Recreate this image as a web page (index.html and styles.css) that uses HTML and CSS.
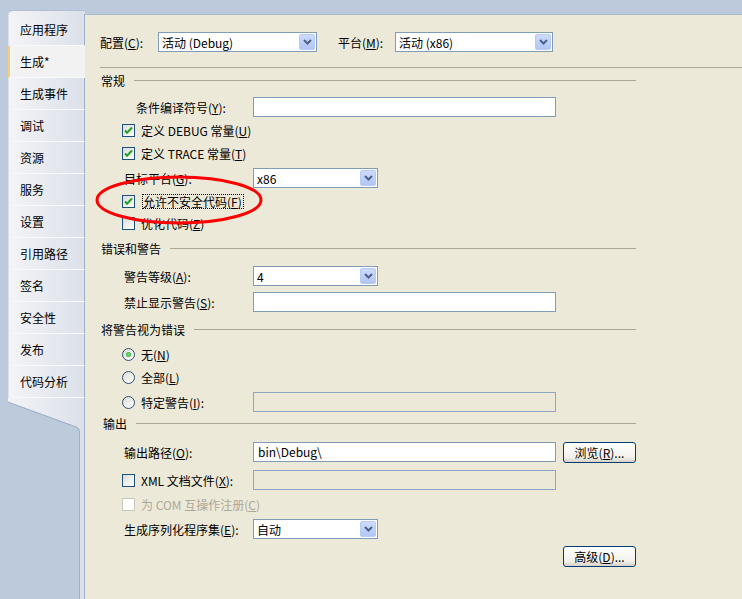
FILE: index.html
```html
<!DOCTYPE html>
<html lang="zh-CN">
<head>
  <meta charset="UTF-8" />
  <title>生成</title>
  <link rel="stylesheet" href="styles.css">
</head>
<body>
  <div class="frame">
    <div class="tabs">
      <ul class="tab-list">
        <li class="tab">应用程序</li>
        <li class="tab active">生成*</li>
        <li class="tab">生成事件</li>
        <li class="tab">调试</li>
        <li class="tab">资源</li>
        <li class="tab">服务</li>
        <li class="tab">设置</li>
        <li class="tab">引用路径</li>
        <li class="tab">签名</li>
        <li class="tab">安全性</li>
        <li class="tab">发布</li>
        <li class="tab">代码分析</li>
      </ul>
      <div class="tab-tail">
        <svg width="77" height="201" viewBox="0 0 77 201">
          <defs>
            <linearGradient id="tailFill" x1="0" y1="0" x2="1" y2="0">
              <stop offset="0" stop-color="#F3F4F7" />
              <stop offset="1" stop-color="#DBE0E9" />
            </linearGradient>
          </defs>
          <path d="M0 0H76V201H72V34Q72 30 68 28.5L1 4L0 3Z" fill="url(#tailFill)" />
          <path d="M0 3.5L1 4.5L68 29Q71.5 30.5 71.5 34V201" fill="none" stroke="#9FAEC4" />
          <path d="M76.5 0V201" stroke="#9DB1CE" />
        </svg>
      </div>
    </div>

    <div class="panel">
      <div class="toolbar">
        <span class="tb-label cfg">配置(<u>C</u>):</span>
        <div class="combo combo-cfg">
          <span>活动 (Debug)</span>
          <span class="combo-btn"><svg width="9" height="6" viewBox="0 0 9 6"><path d="M1 1l3.5 3.5L8 1" fill="none" stroke="#4D6185" stroke-width="2" /></svg></span>
        </div>
        <span class="tb-label plat">平台(<u>M</u>):</span>
        <div class="combo combo-plat">
          <span>活动 (x86)</span>
          <span class="combo-btn"><svg width="9" height="6" viewBox="0 0 9 6"><path d="M1 1l3.5 3.5L8 1" fill="none" stroke="#4D6185" stroke-width="2" /></svg></span>
        </div>
      </div>
      <div class="rule"></div>

      <div class="group mt2">常规</div>
      <div class="row field deep mt7">
        <span class="label">条件编译符号(<u>Y</u>):</span>
        <div class="text"></div>
      </div>
      <div class="row opt mt3">
        <span class="check on"><svg width="11" height="11" viewBox="0 0 11 11"><path d="M2 5.5l2 2.2L9 2.5" fill="none" stroke="#21A121" stroke-width="2" /></svg></span>
        <span>定义 DEBUG 常量(<u>U</u>)</span>
      </div>
      <div class="row opt mt3">
        <span class="check on"><svg width="11" height="11" viewBox="0 0 11 11"><path d="M2 5.5l2 2.2L9 2.5" fill="none" stroke="#21A121" stroke-width="2" /></svg></span>
        <span>定义 TRACE 常量(<u>T</u>)</span>
      </div>
      <div class="row field mt5">
        <span class="label">目标平台(<u>G</u>):</span>
        <div class="combo">
          <span>x86</span>
          <span class="combo-btn"><svg width="9" height="6" viewBox="0 0 9 6"><path d="M1 1l3.5 3.5L8 1" fill="none" stroke="#4D6185" stroke-width="2" /></svg></span>
        </div>
      </div>
      <div class="row opt mt3">
        <span class="check on"><svg width="11" height="11" viewBox="0 0 11 11"><path d="M2 5.5l2 2.2L9 2.5" fill="none" stroke="#21A121" stroke-width="2" /></svg></span>
        <span class="focus">允许不安全代码(<u>F</u>)</span>
      </div>
      <div class="row opt mt2">
        <span class="check"></span>
        <span>优化代码(<u>Z</u>)</span>
      </div>

      <div class="group mt5">错误和警告</div>
      <div class="row field mt8">
        <span class="label">警告等级(<u>A</u>):</span>
        <div class="combo">
          <span>4</span>
          <span class="combo-btn"><svg width="9" height="6" viewBox="0 0 9 6"><path d="M1 1l3.5 3.5L8 1" fill="none" stroke="#4D6185" stroke-width="2" /></svg></span>
        </div>
      </div>
      <div class="row field mt6">
        <span class="label">禁止显示警告(<u>S</u>):</span>
        <div class="text"></div>
      </div>

      <div class="group mt7">将警告视为错误</div>
      <div class="row opt mt5">
        <span class="radio on"></span>
        <span>无(<u>N</u>)</span>
      </div>
      <div class="row opt mt3">
        <span class="radio"></span>
        <span>全部(<u>L</u>)</span>
      </div>
      <div class="row opt mt5">
        <span class="opt-label"><span class="radio"></span><span>特定警告(<u>I</u>):</span></span>
        <div class="text disabled"></div>
      </div>

      <div class="group out mt1">输出</div>
      <div class="row field mt9">
        <span class="label">输出路径(<u>O</u>):</span>
        <div class="text">bin\Debug\</div>
        <button class="btn browse" type="button">浏览(<u>R</u>)...</button>
      </div>
      <div class="row opt mt8">
        <span class="opt-label"><span class="check"></span><span>XML 文档文件(<u>X</u>):</span></span>
        <div class="text disabled"></div>
      </div>
      <div class="row opt off mt4">
        <span class="check off"></span>
        <span>为 COM 互操作注册(<u>C</u>)</span>
      </div>
      <div class="row field mt5">
        <span class="label">生成序列化程序集(<u>E</u>):</span>
        <div class="combo">
          <span>自动</span>
          <span class="combo-btn"><svg width="9" height="6" viewBox="0 0 9 6"><path d="M1 1l3.5 3.5L8 1" fill="none" stroke="#4D6185" stroke-width="2" /></svg></span>
        </div>
      </div>
      <div class="row end mt7">
        <button class="btn" type="button">高级(<u>D</u>)...</button>
      </div>

      <svg class="callout" width="170" height="52" viewBox="0 0 170 52">
        <ellipse cx="85" cy="25" rx="82" ry="23" fill="none" stroke="#FF0000" stroke-width="3" />
      </svg>
    </div>
  </div>
</body>
</html>
```

FILE: styles.css
```css
* { box-sizing: border-box; }
body {
  margin: 0; overflow: hidden;
  background: #BDCADB; color: #000;
  font: 12px "Noto Sans CJK SC", "Noto Sans", sans-serif;
}
u { text-decoration: underline; }

.frame { display: flex; height: 599px; padding: 10px 0 0 8px; }

/* left tab strip */
.tabs { width: 77px; flex-shrink: 0; display: flex; flex-direction: column; }
.tab-list {
  list-style: none; margin: 0; padding: 3px 0 0;
  background: linear-gradient(to right, #F3F4F7, #DBE0E9);
  border-top: 1px solid #AFC0D6; border-left: 1px solid #D9E0EA;
  border-top-left-radius: 5px;
}
.tab {
  height: 32px; line-height: 31px;
  margin-left: 4px; padding-left: 7px;
  border-bottom: 1px solid #F9FAFB; border-right: 1px solid #9DB1CE;
}
.tab.active {
  margin-left: -1px; padding-left: 10px;
  background: #F2F2F2;
  border-left: 2px solid #F3CF7A; border-right-color: #F2F2F2;
}
.tab-tail { flex: 1; }
.tab-tail svg { display: block; }

/* property page */
.panel {
  flex: 1; position: relative;
  margin-top: 4px; padding: 17px 0 0 15px;
  background: #ECE9D8; border-top: 1px solid #A9BAD3;
}
.toolbar { display: flex; align-items: center; height: 20px; }
.tb-label.cfg { width: 58px; }
.tb-label.plat { width: 57px; margin-left: 21px; }
.rule { margin-top: 15px; border-top: 1px solid #ACA899; }

.group {
  display: flex; align-items: center; gap: 9px;
  width: 536px; height: 20px; padding-left: 1px;
}
.group::after { content: ""; flex: 1; height: 1px; background: #ACA899; }
.group.out { padding-left: 3px; }

.row { display: flex; align-items: center; height: 20px; width: 536px; }
.field { padding-left: 24px; }
.field .label { width: 129px; }
.field.deep { padding-left: 36px; }
.field.deep .label { width: 117px; }
.opt { padding-left: 22px; gap: 6px; }
.opt-label { display: flex; align-items: center; gap: 6px; width: 125px; }
.off { color: #ACA899; }
.end { justify-content: flex-end; }

.text {
  width: 303px; height: 20px; padding: 0 4px;
  line-height: 18px; white-space: pre;
  background: #fff; border: 1px solid #7F9DB9;
}
.text.disabled { background: #ECE9D8; border-color: #8EA7C4; }

.combo {
  display: flex; align-items: center;
  width: 125px; height: 20px; padding: 0 1px 0 3px;
  white-space: pre;
  background: #fff; border: 1px solid #7F9DB9;
}
.combo-cfg { width: 159px; }
.combo-plat { width: 158px; }
.combo-btn {
  display: flex; align-items: center; justify-content: center;
  width: 16px; height: 16px; margin-left: auto;
  background: linear-gradient(#CCDBFD, #B1C6F5);
  border: 1px solid #B7CAF5; border-radius: 2px;
}

.check {
  display: inline-flex; align-items: center; justify-content: center;
  width: 13px; height: 13px; flex-shrink: 0;
  border: 1px solid #1C5180;
  background: linear-gradient(135deg, #DCDCD5, #FFFFFF);
}
.check.off { border-color: #CAC8BB; background: #fff; }
.focus { margin-left: 1px; padding-right: 1px; border: 1px dotted #000; line-height: 13px; }

.radio {
  position: relative; width: 13px; height: 13px; flex-shrink: 0;
  border: 1px solid #2F5278; border-radius: 50%;
  background: linear-gradient(135deg, #DCDCD5, #FFFFFF);
}
.radio.on::after {
  content: ""; position: absolute; left: 3px; top: 3px;
  width: 5px; height: 5px; border-radius: 50%;
  background: radial-gradient(#7BE07B, #21A121);
}

.btn {
  width: 73px; height: 21px; padding: 0;
  font: inherit; color: #000;
  border: 1px solid #003C74; border-radius: 3px;
  background: linear-gradient(#FFFFFF, #F1F0EB 75%, #D8D2C6);
}
.btn.browse { margin-left: 7px; }

.callout { position: absolute; left: 9px; top: 160px; }

.mt1 { margin-top: 1px; } .mt2 { margin-top: 2px; } .mt3 { margin-top: 3px; }
.mt4 { margin-top: 4px; } .mt5 { margin-top: 5px; } .mt6 { margin-top: 6px; }
.mt7 { margin-top: 7px; } .mt8 { margin-top: 8px; } .mt9 { margin-top: 9px; }
```
